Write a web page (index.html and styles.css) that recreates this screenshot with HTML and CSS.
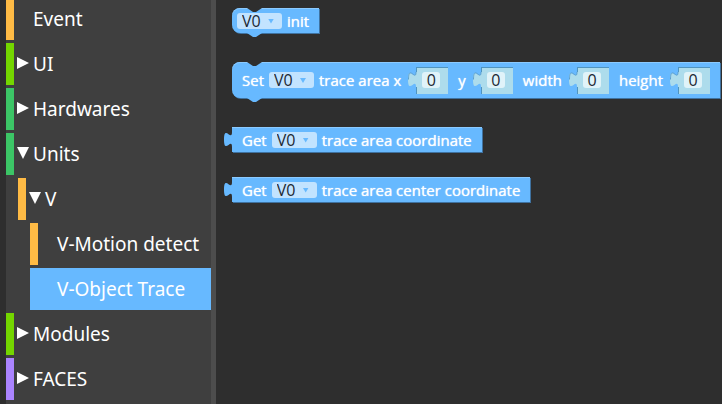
FILE: index.html
```html
<!DOCTYPE html>
<html lang="en">
<head>
<meta charset="utf-8">
<title>Blocks</title>
<link rel="stylesheet" href="styles.css">
</head>
<body>
<svg width="0" height="0" class="defs" aria-hidden="true">
  <symbol id="tab" viewBox="0 0 9 15"><path d="M9 0H8C8 10 0-8 0 7.500S8 5 8 15H9Z"/></symbol>
  <symbol id="tab-line" viewBox="0 0 9 15"><path d="M8 0C8 10 0.500-8 0.500 7.500" fill="none"/></symbol>
  <symbol id="notch" viewBox="0 0 15 4"><path d="M0 0L6 4H9L15 0Z"/></symbol>
</svg>
<div class="app">
  <nav class="toolbox" aria-label="Block categories">
    <ul class="tree">
      <li><button class="row amber">Event</button></li>
      <li><button class="row lime" aria-expanded="false"><i class="arrow closed"></i>UI</button></li>
      <li><button class="row green" aria-expanded="false"><i class="arrow closed"></i>Hardwares</button></li>
      <li><button class="row green" aria-expanded="true"><i class="arrow open"></i>Units</button>
        <ul>
          <li><button class="row amber" aria-expanded="true"><i class="arrow open"></i>V</button>
            <ul>
              <li><button class="row amber">V-Motion detect</button></li>
              <li><button class="row selected">V-Object Trace</button></li>
            </ul>
          </li>
        </ul>
      </li>
      <li><button class="row lime" aria-expanded="false"><i class="arrow closed"></i>Modules</button></li>
      <li><button class="row violet" aria-expanded="false"><i class="arrow closed"></i>FACES</button></li>
    </ul>
  </nav>
  <main class="flyout">
    <div class="block stack compact">
      <svg class="notch"><use href="#notch"/></svg><svg class="bump"><use href="#notch"/></svg>
      <span class="pick"><select aria-label="Unit to initialise"><option>V0</option></select></span>
      <span>init</span>
    </div>
    <div class="block stack tall">
      <svg class="notch"><use href="#notch"/></svg><svg class="bump"><use href="#notch"/></svg>
      <span>Set</span>
      <span class="pick"><select aria-label="Unit to set"><option>V0</option></select></span>
      <label for="x">trace area x</label>
      <span class="value"><svg class="tab"><use href="#tab"/><use href="#tab-line"/></svg><input id="x" type="text" value="0"></span>
      <label for="y">y</label>
      <span class="value"><svg class="tab"><use href="#tab"/><use href="#tab-line"/></svg><input id="y" type="text" value="0"></span>
      <label for="w">width</label>
      <span class="value"><svg class="tab"><use href="#tab"/><use href="#tab-line"/></svg><input id="w" type="text" value="0"></span>
      <label for="h">height</label>
      <span class="value"><svg class="tab"><use href="#tab"/><use href="#tab-line"/></svg><input id="h" type="text" value="0"></span>
    </div>
    <div class="block">
      <svg class="tab"><use href="#tab"/></svg>
      <span>Get</span>
      <span class="pick"><select aria-label="Unit for coordinate"><option>V0</option></select></span>
      <span>trace area coordinate</span>
    </div>
    <div class="block">
      <svg class="tab"><use href="#tab"/></svg>
      <span>Get</span>
      <span class="pick"><select aria-label="Unit for center coordinate"><option>V0</option></select></span>
      <span>trace area center coordinate</span>
    </div>
  </main>
</div>
</body>
</html>
```
FILE: styles.css
```css
* { box-sizing: border-box; }
body {
  margin: 0;
  background: #2e2e2e;
  color: #fff;
  font-family: "Open Sans", "Noto Sans", sans-serif;
  overflow: hidden;
}
.defs { position: absolute; }
.app { display: flex; height: 100vh; padding-left: 6px; }

/* Category tree */
.toolbox {
  flex: none;
  width: 210px;
  overflow: hidden;
  background: #3f3f3f;
  border-right: 5px solid #4d4d4d;
}
ul { margin: 0; padding: 0; list-style: none; }
.tree { margin-top: -2px; }
.tree ul { padding-left: 12px; }
.row {
  display: flex;
  align-items: center;
  width: 100%;
  height: 42px;
  margin-bottom: 3px;
  padding: 0 0 0 19px;
  border: 0;
  border-left: 8px solid;
  background: none;
  font: 19px/42px "Noto Sans", "Open Sans", sans-serif;
  white-space: nowrap;
  text-align: left;
  color: #fff;
}
.row:has(.arrow) { padding-left: 3px; }
.row.amber { border-color: #ffbb45; }
.row.lime { border-color: #74d600; }
.row.green { border-color: #3cc566; }
.row.violet { border-color: #ab84ff; }
.row.selected { border-color: #67b9ff; background: #67b9ff; }
.arrow { flex: none; width: 12px; height: 12px; margin: 0 4px 2px 0; background: #fff; }
.closed { clip-path: polygon(0 0, 100% 50%, 0 100%); }
.open { clip-path: polygon(0 0, 100% 0, 50% 100%); }

/* Blocks */
.flyout {
  flex: 1;
  display: flex;
  flex-direction: column;
  align-items: flex-start;
  gap: 25px;
  padding: 8px 0 0 16px;
}
.block {
  position: relative;
  display: flex;
  align-items: center;
  gap: 5px;
  height: 25px;
  padding: 0 10px;
  background: #67b9ff;
  box-shadow: inset 0 1px #8bcaff, 1px 1px #3f72a0;
  font-size: 15px;
  line-height: 20px;
  font-weight: 500;
  text-shadow: 0 0 1px #fff;
  white-space: nowrap;
}
.stack { border-radius: 8px 0 0 8px; margin-bottom: 4px; }
.compact { padding-left: 5px; }
.tall { height: 36px; }
.notch, .bump { position: absolute; left: 15px; width: 15px; height: 4px; }
.notch { top: 0; fill: #2e2e2e; }
.bump { top: 100%; fill: #67b9ff; }
.tab { position: absolute; left: -8px; top: 5px; width: 9px; height: 15px; fill: #67b9ff; }

.pick { position: relative; display: flex; }
.pick::after {
  content: "";
  position: absolute;
  right: 8px;
  top: 6px;
  width: 6px;
  height: 5px;
  background: #67b9ff;
  clip-path: polygon(0 0, 100% 0, 50% 100%);
  pointer-events: none;
}
select, input {
  height: 16px;
  border: 0;
  border-radius: 3px;
  font: 16px/16px "Open Sans", "Noto Sans", sans-serif;
  text-shadow: none;
  color: #1c2833;
}
select { width: 45px; padding: 0 5px; appearance: none; background: #c2e3ff; }
input { width: 18px; padding: 0; background: #e0f3f9; text-align: center; }

.value {
  position: relative;
  display: flex;
  align-items: center;
  height: 27px;
  margin: 0 5px 0 10px;
  padding: 0 8px 0 6px;
  background: #addcec;
  box-shadow: inset 1px 1px #5094bf;
}
.value .tab { fill: #addcec; stroke-width: 1px; }
.value .tab use + use { stroke: #5c9fce; }
.value:last-child { margin-right: 0; }
```
